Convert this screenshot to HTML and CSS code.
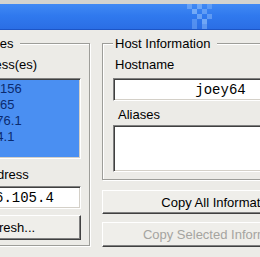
FILE: index.html
```html
<!DOCTYPE html>
<html lang="en">
  <head>
    <meta charset="UTF-8" />
    <title>Host Information</title>
    <link rel="stylesheet" href="styles.css">
  </head>
  <body>
    <div class="titlebar">
      <svg class="titlebar-pattern" width="25" height="25" viewBox="0 0 25 25">
        <rect x="0" y="0" width="5" height="5" fill="#8dbcfa" opacity="0.5" />
        <rect x="10" y="0" width="5" height="5" fill="#8dbcfa" opacity="0.6" />
        <rect x="20" y="0" width="5" height="5" fill="#8dbcfa" opacity="0.4" />
        <rect x="5" y="5" width="5" height="5" fill="#8dbcfa" opacity="0.7" />
        <rect x="15" y="5" width="5" height="5" fill="#8dbcfa" opacity="0.5" />
        <rect x="10" y="10" width="5" height="5" fill="#8dbcfa" opacity="0.6" />
        <rect x="20" y="10" width="5" height="5" fill="#8dbcfa" opacity="0.5" />
        <rect x="5" y="15" width="5" height="5" fill="#8dbcfa" opacity="0.4" />
        <rect x="15" y="15" width="5" height="5" fill="#8dbcfa" opacity="0.7" />
        <rect x="5" y="20" width="5" height="5" fill="#8dbcfa" opacity="0.4" />
        <rect x="15" y="20" width="5" height="5" fill="#8dbcfa" opacity="0.5" />
      </svg>
    </div>

    <div class="main">
      <fieldset class="group group-addresses">
        <legend>Addresses</legend>
        <div class="label">IP Address(es)</div>
        <ul class="address-list sunken">
          <li>10.10.0.156</li>
          <li>10.10.0.65</li>
          <li>10.10.176.1</li>
          <li>10.10.14.1</li>
          <li>10.0.0.1</li>
        </ul>
        <div class="label label-address">Your Address</div>
        <input class="field sunken address" type="text" value="172.16.105.4" />
        <button class="btn btn-refresh">Refresh...</button>
      </fieldset>

      <div class="side">
        <fieldset class="group group-host">
          <legend>Host Information</legend>
          <div class="label">Hostname</div>
          <input class="field sunken hostname" type="text" value="joey64" />
          <div class="label label-aliases">Aliases</div>
          <textarea class="aliases sunken"></textarea>
        </fieldset>
        <button class="btn btn-copy-all">Copy All Information</button>
        <button class="btn btn-copy-selected" disabled>Copy Selected Information</button>
      </div>
    </div>
  </body>
</html>
```

FILE: styles.css
```css
* {
  margin: 0;
  padding: 0;
  box-sizing: border-box;
}
body {
  width: 260px;
  height: 257px;
  overflow: hidden;
  background: #ecebe7;
  font-family: "Liberation Sans", Arial, sans-serif;
  font-size: 13px;
  line-height: 15px;
  color: #000;
}

/* title bar */
.titlebar {
  height: 30px;
  border-top: 4px solid #d3d3cf;
  background: linear-gradient(#4089f4, #3079ee 45%, #2a6de4);
  box-shadow: inset 0 -1px 0 #1d55c6;
  display: flex;
  align-items: flex-start;
}
.titlebar-pattern {
  margin-left: 187px;
}

/* layout */
.main {
  display: flex;
  align-items: flex-start;
  gap: 12px;
  margin-left: -61px;
  padding-top: 6px;
}
.side {
  flex: none;
  width: 235px;
  display: flex;
  flex-direction: column;
}

/* group boxes */
.group {
  flex: none;
  min-width: 0;
  display: flex;
  flex-direction: column;
  border: 1px solid #9d9d99;
  box-shadow: inset 1px 1px 0 #fff, 1px 1px 0 #fff;
}
.group legend {
  padding: 0 7px 0 2px;
  line-height: 15px;
  background: #ecebe7;
}
.group-addresses {
  width: 151px;
  padding: 6px 8px 5px 10px;
}
.group-host {
  width: 235px;
  padding: 6px 8px 7px 10px;
}
.label {
  padding-left: 2px;
}
.label-address {
  margin-top: 8px;
}
.label-aliases {
  margin-top: 6px;
  padding-left: 5px;
}

/* sunken fields */
.sunken {
  border: 1px solid;
  border-color: #808080 #fff #fff #808080;
  box-shadow: inset 1px 1px 0 #404040, inset -1px -1px 0 #d4d0c8;
}
.address-list {
  list-style: none;
  margin-top: 6px;
  height: 81px;
  overflow: hidden;
  padding: 2px;
  background: #4a8ff2;
  color: #0b2b6f;
}
.address-list li {
  line-height: 16px;
  white-space: nowrap;
}
.field {
  width: 100%;
  height: 23px;
  padding: 0 2px;
  background: #fff;
  font-family: "Liberation Mono", "Courier New", monospace;
  font-size: 14px;
  color: #000;
  outline: none;
}
.address {
  margin-top: 4px;
}
.hostname {
  margin-top: 6px;
  text-align: center;
}
.aliases {
  margin-top: 3px;
  height: 47px;
  width: 100%;
  background: #fff;
  resize: none;
  outline: none;
}

/* buttons */
.btn {
  font-family: "Liberation Sans", Arial, sans-serif;
  font-size: 13px;
  color: #000;
  background: #efeeea;
  border: 1px solid;
  border-color: #fff #404040 #404040 #fff;
  box-shadow: inset -1px -1px 0 #808080;
  text-align: center;
}
.btn-refresh {
  margin-top: 6px;
  height: 25px;
  padding-right: 17px;
}
.btn-copy-all {
  margin-top: 10px;
  height: 24px;
}
.btn-copy-selected {
  margin-top: 8px;
  height: 25px;
}
.btn:disabled {
  color: #a5a4a0;
}
```
